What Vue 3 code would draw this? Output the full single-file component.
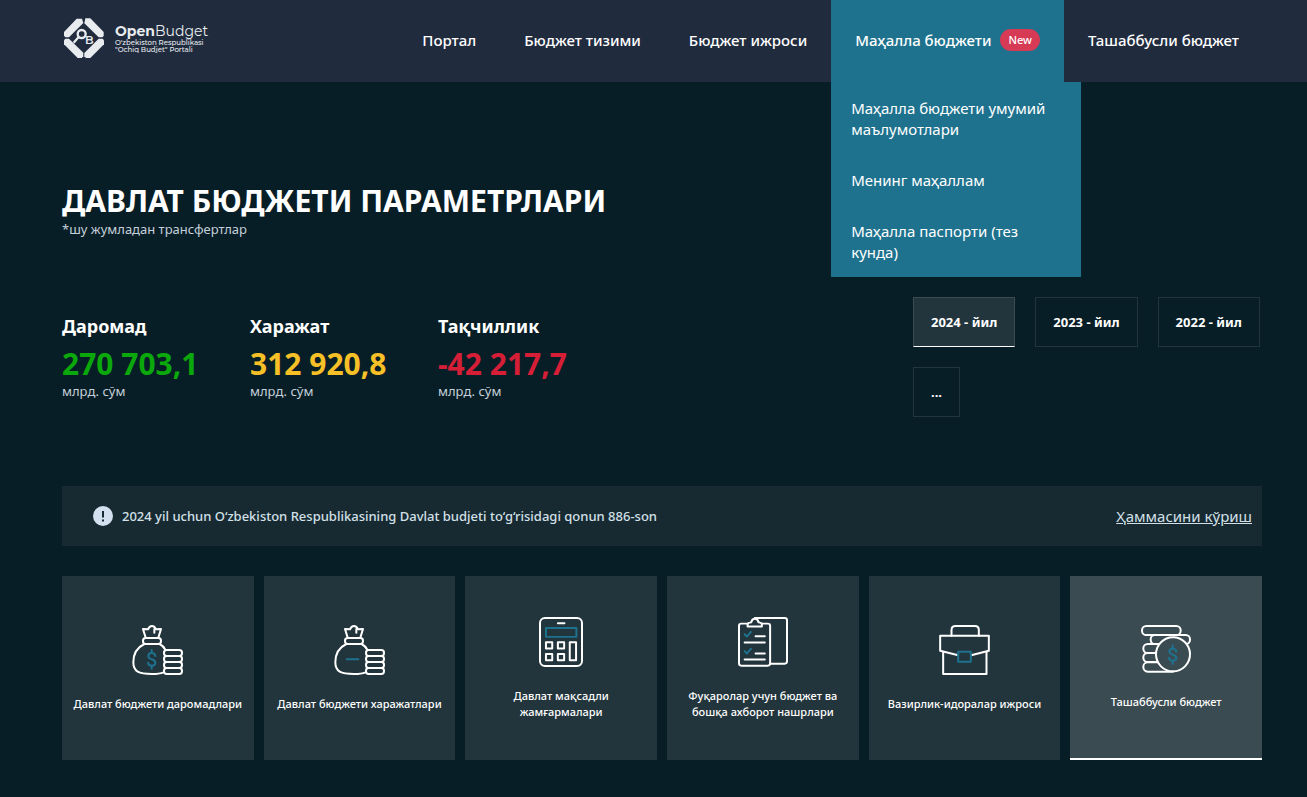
<script setup>
const navItems = [
  { label: 'Портал' },
  { label: 'Бюджет тизими' },
  { label: 'Бюджет ижроси' },
  {
    label: 'Маҳалла бюджети',
    badge: 'New',
    open: true,
    children: ['Маҳалла бюджети умумий маълумотлари', 'Менинг маҳаллам', 'Маҳалла паспорти (тез кунда)'],
  },
  { label: 'Ташаббусли бюджет' },
]

const stats = [
  { title: 'Даромад', value: '270 703,1', tone: 'income' },
  { title: 'Харажат', value: '312 920,8', tone: 'expense' },
  { title: 'Тақчиллик', value: '-42 217,7', tone: 'deficit' },
]

const years = ['2024 - йил', '2023 - йил', '2022 - йил', '...']

const cards = [
  { icon: 'income', label: 'Давлат бюджети даромадлари' },
  { icon: 'expense', label: 'Давлат бюджети харажатлари' },
  { icon: 'calculator', label: 'Давлат мақсадли жамғармалари' },
  { icon: 'clipboard', label: 'Фуқаролар учун бюджет ва бошқа ахборот нашрлари' },
  { icon: 'briefcase', label: 'Вазирлик-идоралар ижроси' },
  { icon: 'coins', label: 'Ташаббусли бюджет', active: true },
]
</script>

<template>
  <div class="page">
    <header class="header">
      <a class="logo" href="#">
        <svg class="logo-mark" viewBox="0 0 120 120" aria-hidden="true">
          <g fill="#e9ecef">
            <path d="M0 42 38 2H54L58 15 15 58H4L0 53Z" />
            <path d="M64 1H79L119 42V54L115 58H104L61 16Z" />
            <path d="M104 62H116L120 67V79L79 120H66L61 115V105Z" />
            <path d="M4 62H15L58 104V115L53 120H41L0 79V67Z" />
          </g>
          <g fill="none" stroke="#e9ecef" stroke-width="7">
            <circle cx="53" cy="48" r="12" />
            <path d="M44 57 29 74" />
          </g>
          <text x="63" y="77" fill="#e9ecef" font-size="34" font-weight="600">B</text>
        </svg>
        <span class="logo-text">
          <span class="logo-name"><b>Open</b>Budget</span>
          <span class="logo-sub">O'zbekiston Respublikasi</span>
          <span class="logo-sub">"Ochiq Budjet" Portali</span>
        </span>
      </a>
      <nav>
        <ul class="nav">
          <li v-for="item in navItems" :key="item.label" class="nav-item" :class="{ open: item.open }">
            <a class="nav-link" href="#">
              {{ item.label }}
              <span v-if="item.badge" class="badge">{{ item.badge }}</span>
            </a>
            <ul v-if="item.children" class="submenu">
              <li v-for="child in item.children" :key="child">
                <a href="#">{{ child }}</a>
              </li>
            </ul>
          </li>
        </ul>
      </nav>
    </header>

    <main class="main">
      <h1>ДАВЛАТ БЮДЖЕТИ ПАРАМЕТРЛАРИ</h1>
      <p class="note">*шу жумладан трансфертлар</p>

      <section class="summary">
        <div class="stats">
          <div v-for="s in stats" :key="s.title" class="stat">
            <h2>{{ s.title }}</h2>
            <p class="value" :class="s.tone">{{ s.value }}</p>
            <p class="unit">млрд. сўм</p>
          </div>
        </div>
        <div class="years">
          <button v-for="(y, i) in years" :key="y" type="button" :class="{ selected: i === 0 }">{{ y }}</button>
        </div>
      </section>

      <section class="notice">
        <svg class="notice-icon" viewBox="0 0 20 20" aria-hidden="true">
          <circle cx="10" cy="10" r="10" fill="#d3e0ef" />
          <path d="M10 5V11.5M10 13.5V15.5" stroke="#172a32" stroke-width="2" />
        </svg>
        <p>2024 yil uchun O‘zbekiston Respublikasining Davlat budjeti to‘g‘risidagi qonun 886-son</p>
        <a href="#">Ҳаммасини кўриш</a>
      </section>

      <section class="cards">
        <a v-for="c in cards" :key="c.label" href="#" class="card" :class="{ active: c.active }">
          <svg v-if="c.icon === 'income' || c.icon === 'expense'" class="icon bag" viewBox="0 0 153 150" aria-hidden="true">
            <path d="M41 38 33 12 48 13Q52 3 60 3Q68 3 72 13L87 12 79 38M67 12V23" />
            <rect x="33" y="39" width="54" height="18" rx="8" />
            <path d="M37 57C14 68 4 88 4 112C4 140 20 147 60 147Q82 147 95 142M83 57Q94 63 100 74" />
            <rect x="96" y="75" width="54" height="18" rx="8" />
            <rect x="96" y="93" width="54" height="18" rx="8" />
            <rect x="96" y="111" width="54" height="18" rx="8" />
            <rect x="96" y="129" width="54" height="18" rx="8" />
            <path v-if="c.icon === 'income'" class="accent" d="M70 93Q69 84 59 84Q49 84 49 93Q49 100 59 103Q70 106 70 114Q70 122 59 122Q49 122 48 113M59 75V84M59 122V131" />
            <path v-else class="accent" d="M38 103H73" />
          </svg>
          <svg v-else-if="c.icon === 'calculator'" class="icon calculator" viewBox="0 0 133 151" aria-hidden="true">
            <rect x="3" y="3" width="127" height="145" rx="15" />
            <path d="M57 19H77" />
            <rect class="accent" x="21" y="33" width="92" height="27" />
            <rect x="21" y="76" width="19" height="19" />
            <rect x="57" y="76" width="19" height="19" />
            <rect x="21" y="112" width="19" height="19" />
            <rect x="57" y="112" width="19" height="19" />
            <rect x="93" y="76" width="19" height="55" />
          </svg>
          <svg v-else-if="c.icon === 'clipboard'" class="icon clipboard" viewBox="0 0 151 151" aria-hidden="true">
            <path d="M29 20H10Q3 20 3 27V140Q3 147 10 147H90Q97 147 97 140V27Q97 20 90 20H72" />
            <path d="M29 29V23Q29 18 36 17L40 16Q42 5 51 5Q60 5 62 16L66 17Q72 18 72 23V29Z" />
            <path d="M51 3H141Q148 3 148 10V134Q148 141 141 141H98" />
            <path d="M53 58H81M20 77H81M53 110H81M20 128H81" />
            <path class="accent" d="M20 52 27 59 39 45M20 103 27 110 39 96" />
          </svg>
          <svg v-else-if="c.icon === 'briefcase'" class="icon briefcase" viewBox="0 0 152 150" aria-hidden="true">
            <path d="M37 32V15Q37 3 49 3H107Q119 3 119 15V32" />
            <path d="M57 91 3 77V32H149V77L96 91" />
            <path d="M12 81V147H142V81" />
            <rect class="accent" x="57" y="80" width="38" height="30" />
          </svg>
          <svg v-else class="icon coins" viewBox="0 0 150 144" aria-hidden="true">
            <rect x="3" y="3" width="116" height="27" rx="13" />
            <rect x="29" y="30" width="118" height="27" rx="13" />
            <rect x="7" y="57" width="100" height="27" rx="13" />
            <rect x="7" y="84" width="100" height="27" rx="13" />
            <rect x="7" y="112" width="100" height="28" rx="13" />
            <circle class="coin-face" cx="96" cy="88" r="51" />
            <path class="accent" d="M106 80Q105 71 95 71Q85 71 85 79Q85 86 95 89Q106 92 106 99Q106 107 95 107Q85 107 84 98M95 61V71M95 107V117" />
          </svg>
          <span>{{ c.label }}</span>
        </a>
      </section>
    </main>
  </div>
</template>

<style>
body {
  margin: 0;
  background: #081e26;
}
</style>

<style scoped>
.page {
  min-height: 100vh;
  background: #081e26;
  color: #fff;
  font-family: "Segoe UI", "Noto Sans", "Open Sans", sans-serif;
}

h1, h2, p, ul {
  margin: 0;
  padding: 0;
}

ul {
  list-style: none;
}

a {
  color: inherit;
  text-decoration: none;
}

.header {
  display: flex;
  justify-content: space-between;
  height: 82px;
  padding: 0 44px 0 63px;
  background: #202b3e;
}

.logo {
  display: flex;
  align-items: center;
  gap: 10px;
  height: 76px;
  color: #e9ecef;
  font-family: Montserrat, Inter, sans-serif;
}

.logo-mark {
  width: 42px;
  height: 40px;
}

.logo-text {
  display: flex;
  flex-direction: column;
}

.logo-name {
  font-size: 14px;
  line-height: 16px;
}

.logo-sub {
  font-size: 7px;
  font-weight: 500;
  line-height: 7px;
}

.nav {
  display: flex;
}

.nav-item {
  position: relative;
}

.nav-link {
  display: flex;
  align-items: center;
  gap: 9px;
  box-sizing: border-box;
  height: 82px;
  padding: 0 24px 2px;
  font-size: 15px;
  font-weight: 500;
  white-space: nowrap;
}

.open .nav-link,
.submenu {
  background: #1e728e;
}

.badge {
  padding: 0 8px;
  border-radius: 11px;
  background: #d63a55;
  font-size: 11px;
  line-height: 22px;
}

.submenu {
  position: absolute;
  z-index: 1;
  top: 100%;
  left: 0;
  width: 250px;
}

.submenu a {
  display: block;
  padding: 16px 20px 14px;
  font-size: 15px;
  line-height: 21px;
}

.main {
  padding: 100px 45px 37px 62px;
}

h1 {
  font-size: 30px;
  font-weight: 700;
  line-height: 38px;
}

.note,
.unit {
  color: #c5d0da;
  font-size: 13px;
  line-height: 18px;
}

.summary {
  display: flex;
  justify-content: space-between;
  padding-top: 59px;
}

.stats {
  display: grid;
  grid-template-columns: repeat(3, 188px);
  padding-top: 16px;
}

h2 {
  font-size: 18px;
  font-weight: 700;
  line-height: 26px;
}

.value {
  padding-top: 7px;
  font-size: 30px;
  font-weight: 700;
  line-height: 36px;
}

.income {
  color: #0ba80b;
}

.expense {
  color: #f7c026;
}

.deficit {
  color: #d61f37;
}

.years {
  display: flex;
  flex-wrap: wrap;
  gap: 20px;
  width: 349px;
}

.years button {
  height: 50px;
  padding: 0 17px;
  border: 1px solid #22353c;
  background: transparent;
  color: #fff;
  font: 700 13px/18px "Segoe UI", "Noto Sans", "Open Sans", sans-serif;
}

.years .selected {
  border-color: #3a4b52 #3a4b52 #fff;
  background: #22353c;
}

.notice {
  display: flex;
  align-items: center;
  min-height: 60px;
  margin: 69px 0 30px;
  padding: 0 10px 0 31px;
  background: #172a32;
  color: #d3e0e8;
}

.notice-icon {
  width: 20px;
  height: 20px;
  margin-right: 9px;
}

.notice p {
  flex: 1;
  font-size: 13px;
  font-weight: 500;
}

.notice a {
  font-size: 15px;
  text-decoration: underline;
}

.cards {
  display: grid;
  grid-template-columns: repeat(6, 1fr);
  gap: 10px;
}

.card {
  display: flex;
  flex-direction: column;
  align-items: center;
  justify-content: center;
  gap: 21px;
  box-sizing: border-box;
  min-height: 184px;
  padding: 0 8px;
  background: #22353c;
  font-size: 11px;
  font-weight: 500;
  line-height: 16px;
  text-align: center;
}

.card.active {
  border-bottom: 2px solid #fff;
  background: #3a4b52;
}

.icon {
  height: 50px;
  fill: none;
  stroke: #fff;
  stroke-width: 6;
  stroke-linecap: round;
  stroke-linejoin: round;
}

.bag,
.briefcase {
  width: 51px;
}

.calculator {
  width: 44px;
}

.clipboard {
  width: 50px;
}

.coins {
  width: 50px;
  height: 48px;
}

.coin-face {
  fill: #3a4b52;
}

.accent {
  stroke: #1e728e;
}
</style>
